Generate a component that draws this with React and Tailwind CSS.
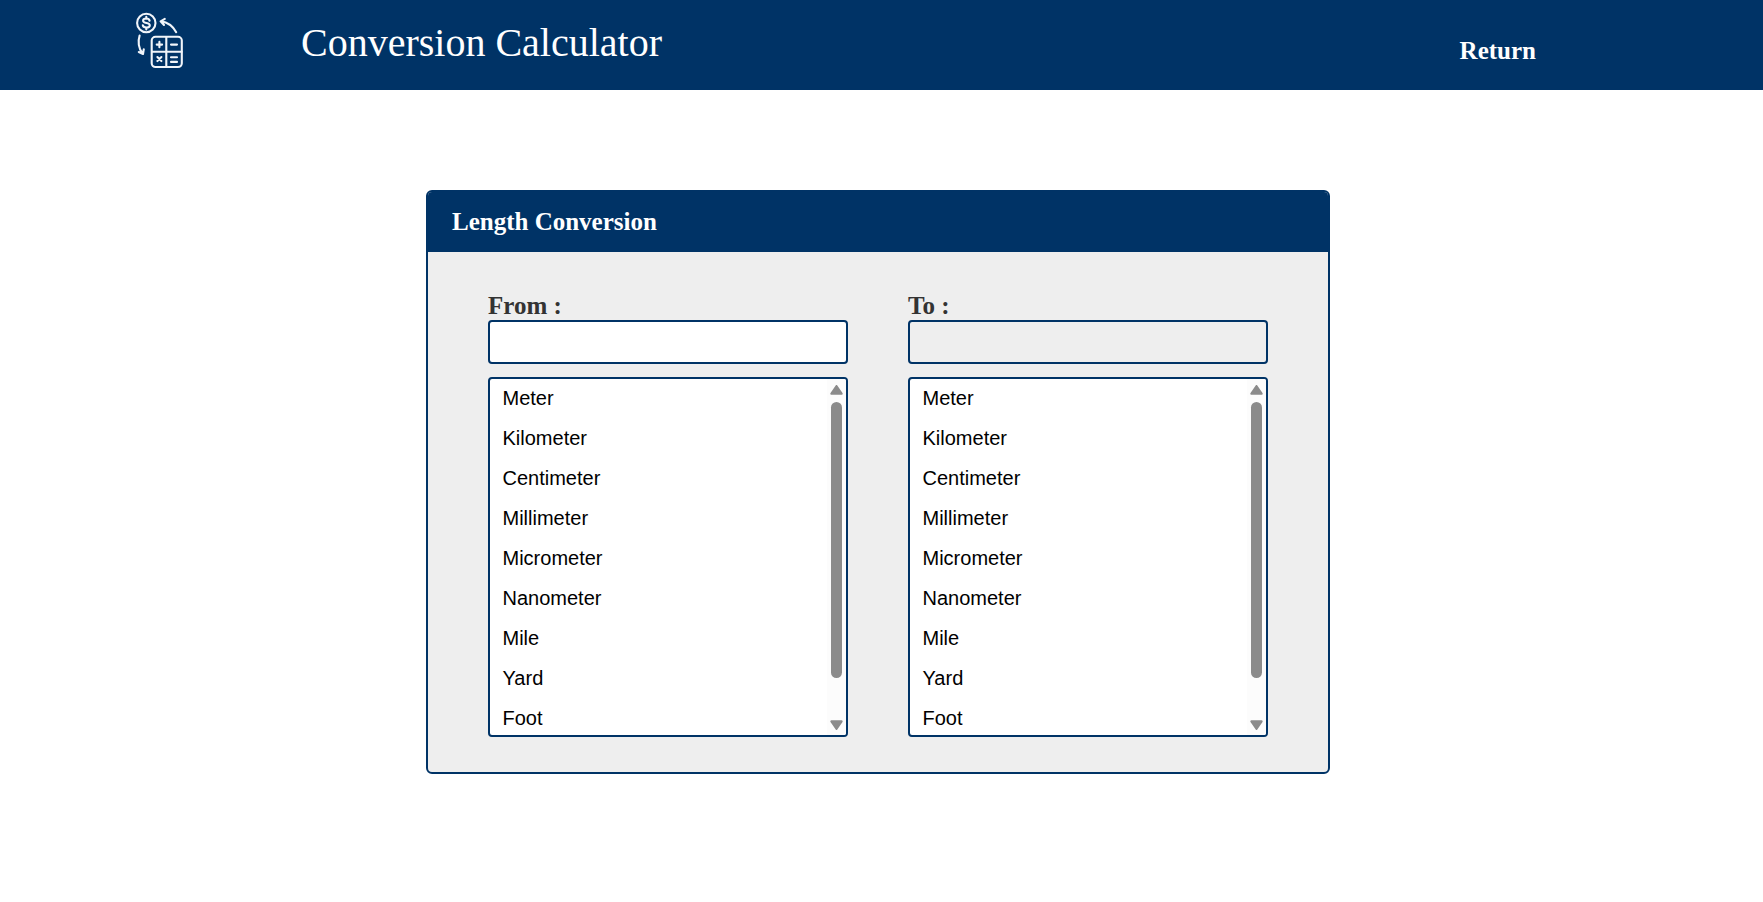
import React from "react";

const UNITS = ["Meter", "Kilometer", "Centimeter", "Millimeter", "Micrometer", "Nanometer", "Mile", "Yard", "Foot"];

function Logo() {
  return (
    <svg
      className="h-[60px] w-[52px]"
      viewBox="0 0 52 60"
      fill="none"
      stroke="#f1f5fa"
      strokeWidth="2.1"
      strokeLinecap="round"
      strokeLinejoin="round"
    >
      <circle cx="12.3" cy="13" r="9.2" />
      <path d="M15.6 10.7c-.3-1.500-1.600-2.200-3.300-2.200-1.900 0-3.200.8-3.200 2.200 0 3.100 6.700 1.500 6.700 4.600 0 1.500-1.500 2.300-3.400 2.300-2 0-3.400-.8-3.600-2.400M12.300 6.800v1.800M12.300 17.500v1.900" />
      <path d="M27 11.400c6 .8 12 5 15.200 10.800M30.800 8.900l-4.200 2.400 3.400 3.700" />
      <path d="M5.600 25.600c-1.800 5.500-1.300 13 3.200 18M4.800 42l4.200 2 .8-4.800" />
      <rect x="17.700" y="26.800" width="30.100" height="30.200" rx="3.800" />
      <path d="M32.300 27v30M18 41.800h29.600" />
      <path d="M22.700 34.600h5.400M25.400 31.900v5.400M37 34.600h6M23.400 47.100l4 4M27.400 47.100l-4 4M37 47.200h6M37 51.900h6" />
    </svg>
  );
}

function Scrollbar() {
  return (
    <div className="flex w-[19px] shrink-0 flex-col items-center bg-[#fcfcfc]">
      <svg className="mt-[6px] h-[10px] w-[13px]" viewBox="0 0 13 10" fill="#8b8b8b">
        <path d="M5.500.700a1.200 1.200 0 0 1 2 0l5 7.400a1.100 1.100 0 0 1-1 1.700h-10a1.100 1.100 0 0 1-1-1.700z" />
      </svg>
      <div className="mt-[7px] h-[276px] w-[11px] rounded-full bg-[#8b8b8b]" />
      <svg className="mt-auto mb-[5px] h-[10px] w-[13px]" viewBox="0 0 13 10" fill="#8b8b8b">
        <path d="M5.500 9.300a1.200 1.200 0 0 0 2 0l5-7.400a1.100 1.100 0 0 0-1-1.700h-10a1.100 1.100 0 0 0-1 1.700z" />
      </svg>
    </div>
  );
}

function Column({ label, readOnly }) {
  return (
    <div className="flex w-[360px] flex-col">
      <label className="text-[25px] leading-[28px] font-bold text-[#333333]">{label}</label>
      <input
        aria-label={label}
        readOnly={readOnly}
        className={
          readOnly
            ? "h-11 w-full rounded-[4px] border-2 border-[#003366] bg-[#eeeeee]"
            : "h-11 w-full rounded-[4px] border-2 border-[#003366] bg-white"
        }
      />
      <div className="mt-[13px] flex h-[360px] overflow-hidden rounded-[4px] border-2 border-[#003366] bg-white">
        <ul className="flex-1 font-['Liberation_Sans',Arial,sans-serif] text-[20px] leading-[38px] text-black">
          {UNITS.map((unit) => (
            <li key={unit} className="h-10 pl-[12.5px]">
              {unit}
            </li>
          ))}
        </ul>
        <Scrollbar />
      </div>
    </div>
  );
}

export default function App() {
  return (
    <div className="min-h-screen bg-white font-['Liberation_Serif','Times_New_Roman',serif]">
      <header className="flex h-[90px] items-start bg-[#003366] pt-[10px] pl-[134px] text-white">
        <Logo />
        <h1 className="ml-[115px] pt-[10px] text-[40px] leading-[46px]">Conversion Calculator</h1>
        <a href="#" className="mr-[227px] ml-auto pt-[27px] text-[25px] leading-[28px] font-bold">
          Return
        </a>
      </header>
      <main className="pt-[100px] pl-[426px]">
        <section className="h-[584px] w-[904px] overflow-hidden rounded-[6px] border-2 border-[#003366] bg-[#eeeeee]">
          <h2 className="flex h-[60px] items-center bg-[#003366] pl-6 text-[25px] leading-[28px] font-bold text-white">
            Length Conversion
          </h2>
          <div className="flex gap-[60px] pt-10 pl-[60px]">
            <Column label="From :" />
            <Column label="To :" readOnly />
          </div>
        </section>
      </main>
    </div>
  );
}
